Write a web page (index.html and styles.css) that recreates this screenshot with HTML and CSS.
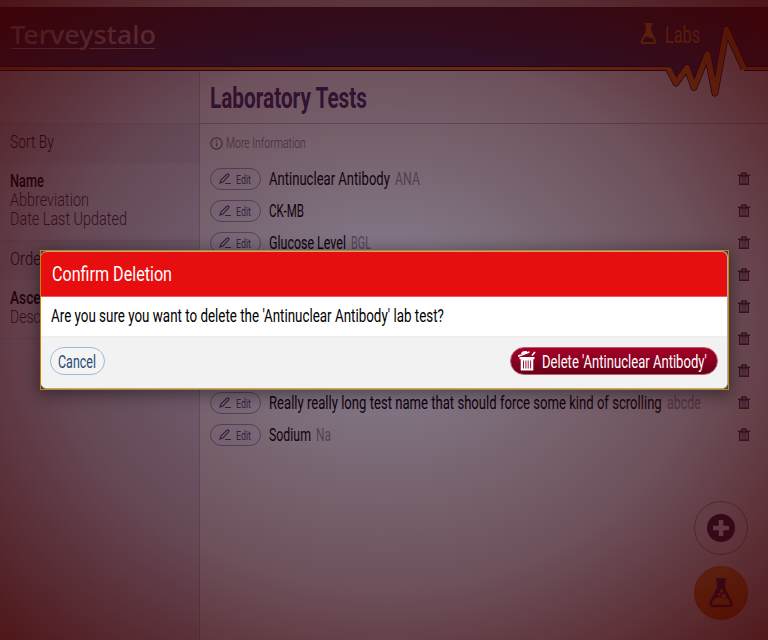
FILE: index.html
```html
<!DOCTYPE html>
<html lang="en">
<head>
<meta charset="utf-8">
<title>Laboratory Tests</title>
<link rel="stylesheet" href="styles.css">
</head>
<body>
<svg class="defs" width="0" height="0">
  <symbol id="pen" viewBox="0 0 12 12"><path d="M1 10l1-3.200L8 1.200q.8-.7 1.600 0 .9.9.1 1.700L4 8.900 1 10zM6 10.500h6" fill="none" stroke="currentColor" stroke-width="1.200"/></symbol>
  <symbol id="trash" viewBox="0 0 12 14"><path d="M4 2.500V1h4v1.500M0 3.200h12M1.700 4.900h8.600v7.400H1.700z" fill="none" stroke="currentColor" stroke-width="1.400"/><path d="M4.200 5.500v6.500M6 5.500v6.500M7.800 5.500v6.500" stroke="currentColor" stroke-width=".9"/></symbol>
</svg>
<div class="app">
  <div class="topstrip"></div>
  <header class="header">
    <svg class="logo" width="150" height="30"><text y="20.500" data-w="146">Terveystalo</text><path d="M1 25.500H71M79 25.500H145"/></svg>
    <div class="section">
      <svg width="17" height="22" viewBox="0 0 17 22"><path d="M4.500 0h8v2h-1.300v6l4.800 9.500q1.500 3.500-2 3.500H3q-3.500 0-2-3.500L5.800 8V2H4.500zM4.500 14.500L3 17.500q-.8 1.700 1 1.700h9q1.800 0 1-1.700l-1.500-3q-2 1.500-3.700-.1-2-1.600-4.300.1z" fill="currentColor" fill-rule="evenodd"/></svg>
      <svg class="t" width="36" height="26"><text y="20" data-w="35">Labs</text></svg>
    </div>
    <svg class="pulse" width="108" height="80" viewBox="660 20 108 80">
      <path class="light" d="M681 72L687 67 690 72zM696 72L707.500 54 711 72zM718 72L726.500 29 744 70V72z"/>
      <path class="dark" d="M668 67L676 83 686 67zM688 67L694 88 702 67zM710 67L715 93 719 67z"/>
      <path class="edge thin" d="M660 68.500H668M744 68.500H768"/>
      <path class="edge" d="M668.500 68.500L676 83 687 67.500 694 87.500 707.500 54 715 93 726.500 29.500 744 68.500"/>
      <path class="line thin" d="M660 68.500H669M743 68.500H768"/>
      <path class="line" d="M668.500 68.500L676 83 687 67.500 694 87.500 707.500 54 715 93 726.500 29.500 744 68.500"/>
    </svg>
  </header>
  <div class="columns">
    <aside class="side">
      <div class="spacer"></div>
      <div class="band"><svg class="t" width="46" height="20"><text y="15" data-w="44">Sort By</text></svg></div>
      <div class="opts">
        <svg class="t on" width="36" height="19"><text y="15" data-w="34">Name</text></svg>
        <svg class="t" width="80" height="19"><text y="15" data-w="79">Abbreviation</text></svg>
        <svg class="t" width="118" height="19"><text y="15" data-w="117">Date Last Updated</text></svg>
      </div>
      <div class="band"><svg class="t" width="40" height="20"><text y="15" data-w="36">Order</text></svg></div>
      <div class="opts last">
        <svg class="t on" width="70" height="19"><text y="15" data-w="65">Ascending</text></svg>
        <svg class="t" width="76" height="19"><text y="15" data-w="72">Descending</text></svg>
      </div>
    </aside>
    <main class="main">
      <h1 class="title"><svg class="t" width="160" height="36"><text y="28.500" data-w="157">Laboratory Tests</text></svg></h1>
      <div class="more">
        <svg width="13" height="13" viewBox="0 0 13 13" fill="none" stroke="currentColor"><circle cx="6.500" cy="6.500" r="5.600" stroke-width="1.200"/><path d="M6.500 6v3.500M6.500 3.500v1.200" stroke-width="1.300"/></svg>
        <svg class="t" width="82" height="18"><text y="13.500" data-w="80">More Information</text></svg>
      </div>
      <ul class="rows" id="rows"></ul>
    </main>
  </div>
  <div class="fabs">
    <div class="fab"><svg width="28" height="28" viewBox="0 0 28 28"><path d="M14 0a14 14 0 1 0 0 28 14 14 0 0 0 0-28zM11.700 6h4.600v5.700H22v4.600h-5.700V22h-4.600v-5.700H6v-4.600h5.700z" fill="currentColor" fill-rule="evenodd"/></svg></div>
    <div class="fab amber"><svg width="24" height="30" viewBox="0 0 24 30"><path d="M7 1.500h10M9 2v8.500L2 24q-1.700 4 2 4h16q3.700 0 2-4L15 10.500V2" fill="none" stroke="currentColor" stroke-width="2.400"/><path d="M8 2h8v8H8zM9 10h6l5 10q-2 0-4 .5-2 .5-4-1-3-1.500-7 2z" fill="currentColor"/><circle cx="12.500" cy="13" r="1.700" class="bub"/><circle cx="14.800" cy="18" r="2.200" class="bub"/><circle cx="10.200" cy="16.500" r="1.400" class="bub"/></svg></div>
  </div>
</div>
<div class="backdrop"></div>
<div class="dialog" role="dialog">
  <div class="panel">
    <div class="dhead"><svg class="t" width="122" height="28"><text y="21" data-w="120">Confirm Deletion</text></svg></div>
    <div class="dbody"><svg class="t" width="394" height="22"><text y="18" data-w="393">Are you sure you want to delete the 'Antinuclear Antibody' lab test?</text></svg></div>
    <div class="dfoot">
      <button class="cancel"><svg class="t" width="38" height="22"><text y="18" data-w="38">Cancel</text></svg></button>
      <button class="delete">
        <svg width="18" height="20" viewBox="0 0 18 20"><path d="M1.500 6h15v2.200h-15zM2.700 8h12.600v11.500H2.700z" fill="#fff"/><path d="M0 5.200L11.500 1M3.500 3L5 1.300 9 .5M14 4.500l3-3.500" stroke="#fff" stroke-width="1.700" fill="none"/><path d="M5.500 9.500v8M7.900 9.500v8M10.200 9.500v8M12.600 9.500v8" stroke="#85001f" stroke-width=".9"/></svg>
        <svg class="t" width="166" height="22"><text y="18" data-w="165">Delete 'Antinuclear Antibody'</text></svg>
      </button>
    </div>
  </div>
</div>
<script src="rows.js"></script>
</body>
</html>
```
FILE: styles.css
```css
* { box-sizing: border-box; }
body { margin: 0; width: 768px; height: 640px; overflow: hidden; background: #fff; font-family: Roboto, "Liberation Sans", sans-serif; }
svg { display: block; flex: none; }
.defs { position: absolute; }
.t { overflow: visible; }
text { fill: currentColor; }
.app { height: 640px; display: flex; flex-direction: column; background: #fdfdff; isolation: isolate; }
.topstrip { height: 7px; background: #d2ccd2; }
.header { position: relative; height: 64px; background: linear-gradient(#3c2438, #34305c); border-bottom: 1px solid #25003c; display: flex; justify-content: space-between; padding: 16px 67px 0 10px; }
.header::after { content: ""; position: absolute; left: 0; right: 108px; bottom: 0; height: 3px; background: #e8860f; box-shadow: 0 -1px #25003c; }
.logo { color: #d8b0bc; font: 500 25px "Noto Sans", "Open Sans", sans-serif; overflow: visible; }
.logo path { stroke: currentColor; stroke-width: 1.200; }
.section { display: flex; gap: 7px; color: #f09018; font-size: 24px; font-weight: 400; }
.section .t { margin-left: 1px; }
.pulse { position: absolute; right: 0; top: 13px; z-index: 2; }
.pulse .light { fill: #fdfdff; }
.pulse .dark { fill: #34305c; }
.pulse .edge { fill: none; stroke: #25003c; stroke-width: 7; stroke-linejoin: round; }
.pulse .line { fill: none; stroke: #f08a10; stroke-width: 5.400; stroke-linejoin: round; }
.pulse .edge.thin { stroke-width: 5; }
.pulse .line.thin { stroke-width: 3; }
.columns { flex: 1; display: flex; }
.side { width: 200px; background: #e6e4f0; border-right: 1px solid #c2bed0; color: #1a0a20; font-size: 18px; font-weight: 300; }
.spacer { height: 52px; }
.band { height: 40px; padding: 9px 10px 0; background: #dcdae6; border-top: 1px solid #d0cedb; font-size: 18px; }
.opts { padding: 9px 10px 10px; height: 77px; color: #45304a; }
.opts.last { border-bottom: 1px solid #d4d0dc; height: 59px; }
.opts .on { color: #000; font-weight: 500; }
.main { flex: 1; }
.title { margin: 0; height: 53px; padding: 9px 10px 0; border-bottom: 1px solid #c4bece; color: #443270; font-size: 29px; font-weight: 700; }
.more { height: 38px; margin-bottom: 1px; padding: 0 10px; display: flex; align-items: center; gap: 3px; color: #7c7086; font-size: 14.500px; font-weight: 300; }
.rows { list-style: none; margin: 0; padding: 0 18px 0 10px; }
.row { height: 32px; display: flex; align-items: center; color: #000; font-size: 18px; font-weight: 400; }
.edit { width: 51px; height: 22px; margin-right: 8px; border: 1px solid #98a0c8; border-radius: 11px; display: flex; align-items: center; padding-left: 8px; gap: 5px; color: #485490; font-size: 13px; }
.abbr { margin-left: 5px; color: #a098a8; }
.bin { margin-left: auto; color: #4c3c60; }
.fabs { position: absolute; left: 694px; top: 501px; display: flex; flex-direction: column; gap: 11px; }
.fab { width: 54px; height: 54px; border-radius: 50%; border: 1px solid #b098a8; display: grid; place-items: center; color: #3a2050; }
.amber { background: linear-gradient(#f8a034, #ee7c00); border-color: #e87400; }
.bub { fill: #ee8412; }
.backdrop { position: absolute; inset: 0; background: radial-gradient(rgba(12, 0, 32, .48), rgba(44, 2, 16, .69) 60%, rgba(62, 0, 2, .9)); }
.dialog { position: absolute; left: 40px; top: 250px; width: 689px; height: 140px; border: 1px solid #c98400; background: #42424c; box-shadow: 0 3px 15px 2px rgba(0, 0, 0, .42); }
.panel { height: 138px; border-radius: 6px; border: 1px solid #aaa; border-width: 1px 1px 1px 0; overflow: hidden; background: #fff; }
.dhead { height: 45px; padding: 8px 11px 0; background: #e60e0e; border-bottom: 1px solid #f05a5a; color: #fff; font-size: 20.500px; }
.dbody { height: 39px; padding: 7px 10px 0; color: #000; font-size: 18px; }
.dfoot { height: 52px; background: #f2f2f2; border-top: 1px solid #eee; padding: 10px 9px; display: flex; justify-content: space-between; align-items: flex-start; }
button { height: 28px; border-radius: 14px; font: 18px Roboto, sans-serif; display: flex; align-items: center; }
.cancel { width: 55px; padding: 0 7px; background: #f4f4f4; border: 1px solid #9fb9da; color: #2c4a78; }
.delete { width: 208px; padding: 0 7px; gap: 6px; border: 1px solid #b86070; background: linear-gradient(#a80028, #680018); color: #fff; }
```
FILE: rows.js
```js
const tests = [
  ["Antinuclear Antibody", 121, "ANA", 25],
  ["CK-MB", 35, "", 0],
  ["Glucose Level", 77, "BGL", 20],
  ["Hematocrit", 62, "HCT", 22],
  ["Hemoglobin", 66, "Hgb", 22],
  ["Platelets", 54, "PLT", 22],
  ["Potassium", 60, "K", 8],
  ["Really really long test name that should force some kind of scrolling", 393, "abcde", 34],
  ["Sodium", 42, "Na", 15]
];
const label = (text, width, cls = "") => text
  ? `<svg class="t ${cls}" width="${width}" height="20"><text y="16" data-w="${width}">${text}</text></svg>` : "";
document.getElementById("rows").innerHTML = tests.map(([name, w, abbr, aw]) =>
  `<li class="row"><span class="edit"><svg width="12" height="12"><use href="#pen"/></svg><svg class="t" width="15" height="16"><text y="13" data-w="15">Edit</text></svg></span>${label(name, w)}${label(abbr, aw, "abbr")}<svg class="bin" width="12" height="14"><use href="#trash"/></svg></li>`
).join("");

for (const t of document.querySelectorAll("text[data-w]")) {
  t.setAttribute("transform", `scale(${t.dataset.w / t.getComputedTextLength()} 1)`);
}
```
